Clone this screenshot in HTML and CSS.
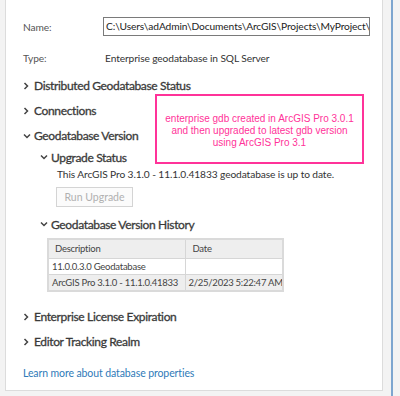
FILE: index.html
```html
<!DOCTYPE html>
<html lang="en">
<head>
  <meta charset="UTF-8" />
  <title>Database Properties</title>
  <link rel="stylesheet" href="styles.css">
</head>
<body>
  <div class="panel">
    <div class="field">
      <span class="label">Name:</span>
      <div class="path">C:\Users\adAdmin\Documents\ArcGIS\Projects\MyProject\enterprise.sde</div>
    </div>
    <div class="field type">
      <span class="label">Type:</span>
      <span class="value">Enterprise geodatabase in SQL Server</span>
    </div>

    <div class="section first"><svg class="chev" viewBox="0 0 6 8"><path d="M1.5 1 L4.5 4 L1.5 7" /></svg>Distributed Geodatabase Status</div>
    <div class="section"><svg class="chev" viewBox="0 0 6 8"><path d="M1.5 1 L4.5 4 L1.5 7" /></svg>Connections</div>
    <div class="section"><svg class="chev down" viewBox="0 0 8 6"><path d="M1 1.5 L4 4.5 L7 1.5" /></svg>Geodatabase Version</div>

    <div class="sub">
      <div class="section small"><svg class="chev down" viewBox="0 0 8 6"><path d="M1 1.5 L4 4.5 L7 1.5" /></svg>Upgrade Status</div>
      <p class="status">This ArcGIS Pro 3.1.0 - 11.1.0.41833 geodatabase is up to date.</p>
      <button class="upgrade" disabled>Run Upgrade</button>

      <div class="section small history"><svg class="chev down" viewBox="0 0 8 6"><path d="M1 1.5 L4 4.5 L7 1.5" /></svg>Geodatabase Version History</div>
      <table class="versions">
        <tr><th class="desc">Description</th><th class="date">Date</th></tr>
        <tr><td>11.0.0.3.0 Geodatabase</td><td></td></tr>
        <tr class="alt"><td>ArcGIS Pro 3.1.0 - 11.1.0.41833</td><td>2/25/2023 5:22:47 AM</td></tr>
      </table>
    </div>

    <div class="section license"><svg class="chev" viewBox="0 0 6 8"><path d="M1.5 1 L4.5 4 L1.5 7" /></svg>Enterprise License Expiration</div>
    <div class="section"><svg class="chev" viewBox="0 0 6 8"><path d="M1.5 1 L4.5 4 L1.5 7" /></svg>Editor Tracking Realm</div>

    <a class="learn" href="#">Learn more about database properties</a>

    <div class="callout">enterprise gdb created in ArcGIS Pro 3.0.1<br>and then upgraded to latest gdb version<br>using ArcGIS Pro 3.1</div>
  </div>
  <div class="gutter"></div>
  <div class="splitter"></div>
</body>
</html>
```

FILE: styles.css
```css
* { box-sizing: border-box; }

body {
  margin: 0;
  background: #f3f3f3;
  font-family: Lato, 'Open Sans', sans-serif;
  font-size: 10.2px;
  letter-spacing: -0.1px;
  color: #333;
  display: flex;
  height: 396px;
  overflow: hidden;
}

.panel {
  position: relative;
  margin-left: 5px;
  width: 378px;
  height: 391px;
  background: #fff;
  border: 1px solid #dcdcdc;
  border-top: none;
  padding: 17px 0 0 17px;
}

.gutter {
  width: 8px;
}

.splitter {
  width: 2px;
  background: #7ea6cf;
}

.field {
  display: flex;
  align-items: center;
  height: 19px;
}

.field.type {
  margin-top: 12px;
}

.label {
  width: 80px;
  color: #555;
}

.path {
  width: 267px;
  height: 19px;
  border: 1px solid #7a7a7a;
  padding: 0 2px;
  line-height: 17px;
  white-space: nowrap;
  overflow: hidden;
  color: #222;
}

.value {
  padding-left: 2px;
}

.section {
  display: flex;
  align-items: center;
  height: 25px;
  font-size: 12px;
  letter-spacing: -0.35px;
  color: #3a3a3a;
  -webkit-text-stroke: 0.3px #3a3a3a;
}

.section.first {
  margin-top: 6px;
}

.section.small {
  height: 18px;
}

.chev {
  width: 6px;
  height: 8px;
  margin-right: 5px;
  fill: none;
  stroke: #444;
  stroke-width: 1.5;
}

.chev.down {
  width: 8px;
  height: 6px;
  margin-right: 3px;
}

.sub {
  padding-left: 17px;
}

.status {
  margin: 0;
  padding-left: 17px;
  line-height: 16px;
  white-space: nowrap;
}

.upgrade {
  display: block;
  margin: 5px 0 0 16px;
  width: 77px;
  height: 20px;
  border: 1px solid #d4d4d4;
  background: #fbfbfb;
  color: #b0b0b0;
  font-family: inherit;
  font-size: 10.5px;
  padding: 0;
}

.history {
  margin-top: 8px;
}

.versions {
  margin: 5px 0 0 7px;
  width: 237px;
  table-layout: fixed;
  border-collapse: collapse;
  border: 2px solid #dadada;
  font-size: 9.5px;
  letter-spacing: -0.25px;
  color: #444;
}

.versions th,
.versions td {
  border: 1px solid #d6d6d6;
  padding: 0 2px 0 3px;
  text-align: left;
  font-weight: normal;
  white-space: nowrap;
  overflow: hidden;
  line-height: 13px;
}

.versions th {
  height: 19px;
  background: #eeeeee;
  padding-left: 6px;
}

.versions th.desc {
  width: 137px;
}

.versions th.date {
  padding-left: 7px;
}

.versions td {
  height: 16px;
}

.versions tr.alt td {
  background: #eeeeee;
  height: 17px;
}

.license {
  margin-top: 12px;
}

.learn {
  display: block;
  margin-top: 11px;
  line-height: 16px;
  font-size: 10.5px;
  color: #2f7ab8;
  text-decoration: none;
}

.callout {
  position: absolute;
  left: 149px;
  top: 94px;
  width: 209px;
  height: 70px;
  border: 2px solid #ff3399;
  padding-top: 17px;
  text-align: center;
  font-family: 'Liberation Sans', Arial, sans-serif;
  font-size: 10px;
  letter-spacing: 0;
  line-height: 12px;
  color: #ff3399;
}
```
